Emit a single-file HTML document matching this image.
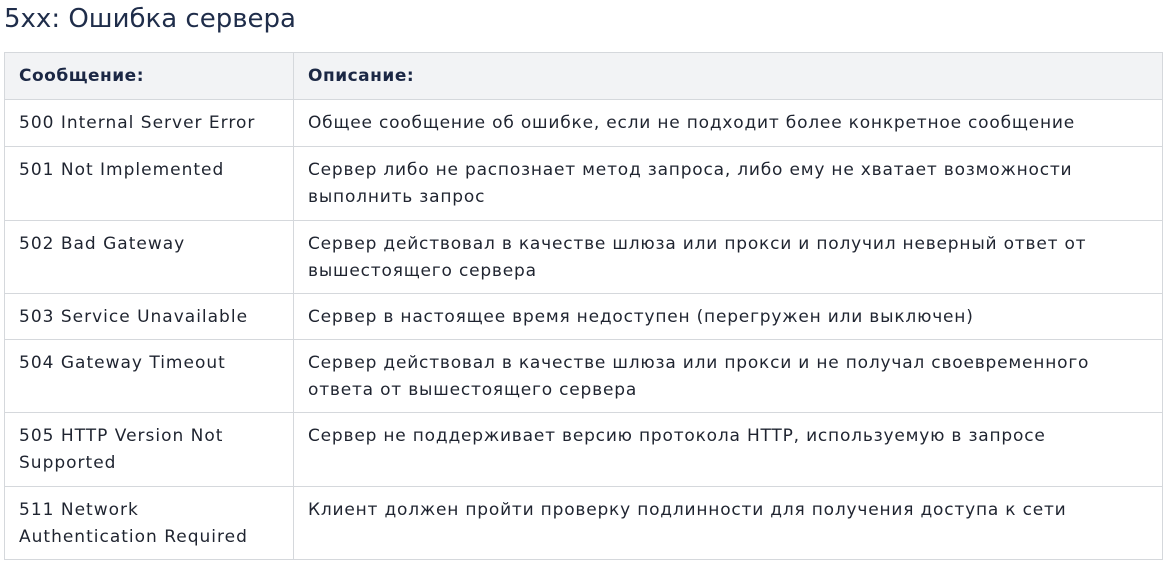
<!DOCTYPE html>
<html><head><meta charset="utf-8"><style>
body{margin:0;background:#fff;font-family:"DejaVu Sans","Liberation Sans",sans-serif;color:#1f2430;}
h2{position:absolute;left:4px;top:2px;margin:0;font-weight:normal;font-size:26px;color:#1f2d4a;line-height:34px;}
table{position:absolute;left:4px;top:52px;width:1159px;border-collapse:collapse;table-layout:fixed;font-size:17px;letter-spacing:0.8px;}
td,th{border:1px solid #d5d8dc;padding:10px 14px 0 14px;vertical-align:top;line-height:27px;white-space:nowrap;text-align:left;}
td:first-child{letter-spacing:1px;}
th{background:#f2f3f5;font-weight:bold;color:#1b2744;height:36px;padding-top:10px;letter-spacing:0.5px;}
col.a{width:289px}
</style></head><body>
<h2>5xx: Ошибка сервера</h2>
<table>
<colgroup><col class="a"><col></colgroup>
<tr style="height:46px"><th>Сообщение:</th><th>Описание:</th></tr>
<tr style="height:47px"><td>500 Internal Server Error</td><td>Общее сообщение об ошибке, если не подходит более конкретное сообщение</td></tr>
<tr style="height:74px"><td>501 Not Implemented</td><td>Сервер либо не распознает метод запроса, либо ему не хватает возможности<br>выполнить запрос</td></tr>
<tr style="height:73px"><td>502 Bad Gateway</td><td>Сервер действовал в качестве шлюза или прокси и получил неверный ответ от<br>вышестоящего сервера</td></tr>
<tr style="height:46px"><td>503 Service Unavailable</td><td>Сервер в настоящее время недоступен (перегружен или выключен)</td></tr>
<tr style="height:73px"><td>504 Gateway Timeout</td><td>Сервер действовал в качестве шлюза или прокси и не получал своевременного<br>ответа от вышестоящего сервера</td></tr>
<tr style="height:74px"><td>505 HTTP Version Not<br>Supported</td><td>Сервер не поддерживает версию протокола HTTP, используемую в запросе</td></tr>
<tr style="height:73px"><td>511 Network<br>Authentication Required</td><td>Клиент должен пройти проверку подлинности для получения доступа к сети</td></tr>
</table>
</body></html>
